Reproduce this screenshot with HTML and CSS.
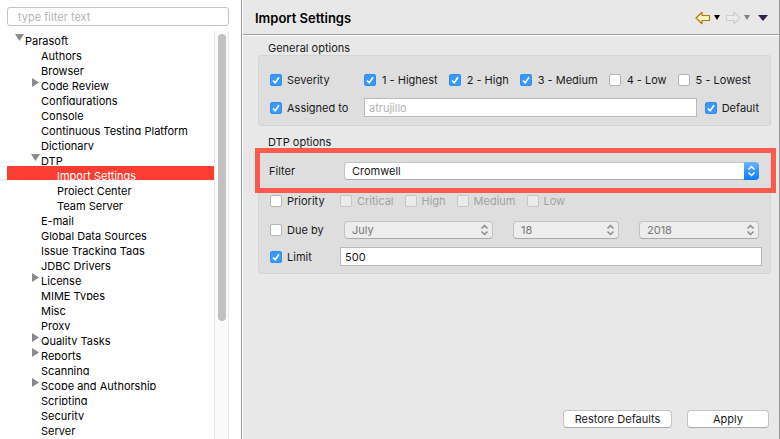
FILE: index.html
```html
<!DOCTYPE html>
<html lang="en">
<head>
    <meta charset="UTF-8">
    <meta name="viewport" content="width=device-width, initial-scale=1.0">
    <title>Preferences</title>
    <link rel="stylesheet" href="styles.css">
</head>
<body>
    <div class="window">
        <nav class="sidebar">
            <input class="filter" type="text" placeholder="type filter text" aria-label="type filter text">
            <div class="tree-area">
                <ul class="tree">
                    <li class="open">Parasoft</li>
                    <li class="level1">Authors</li>
                    <li class="level1">Browser</li>
                    <li class="level1 closed">Code Review</li>
                    <li class="level1">Configurations</li>
                    <li class="level1">Console</li>
                    <li class="level1">Continuous Testing Platform</li>
                    <li class="level1">Dictionary</li>
                    <li class="level1 open">DTP</li>
                    <li class="level2 selected">Import Settings</li>
                    <li class="level2">Project Center</li>
                    <li class="level2">Team Server</li>
                    <li class="level1">E-mail</li>
                    <li class="level1">Global Data Sources</li>
                    <li class="level1">Issue Tracking Tags</li>
                    <li class="level1">JDBC Drivers</li>
                    <li class="level1 closed">License</li>
                    <li class="level1">MIME Types</li>
                    <li class="level1">Misc</li>
                    <li class="level1">Proxy</li>
                    <li class="level1 closed">Quality Tasks</li>
                    <li class="level1 closed">Reports</li>
                    <li class="level1">Scanning</li>
                    <li class="level1 closed">Scope and Authorship</li>
                    <li class="level1">Scripting</li>
                    <li class="level1">Security</li>
                    <li class="level1">Server</li>
                </ul>
                <div class="scrollbar"><div class="thumb"></div></div>
            </div>
        </nav>

        <main class="page">
            <header class="header">
                <h1>Import Settings</h1>
                <div class="toolbar">
                    <button class="tool" type="button" aria-label="Back">
                        <svg width="16" height="14" viewBox="0 0 16 14"><path d="M1 7 7 1.3V4.5H14.5V9.5H7V12.7Z" fill="#fff3c4" stroke="#b8780f" stroke-width="1.2" stroke-linejoin="round"/></svg>
                        <svg width="6" height="5" viewBox="0 0 6 5"><path d="M0 0H6L3 5Z" fill="#000"/></svg>
                    </button>
                    <button class="tool" type="button" aria-label="Forward" disabled>
                        <svg width="16" height="14" viewBox="0 0 16 14"><path d="M15 7 9 1.3V4.5H1.5V9.5H9V12.7Z" fill="#ececec" stroke="#cfcfcf" stroke-width="1.2" stroke-linejoin="round"/></svg>
                        <svg width="6" height="5" viewBox="0 0 6 5"><path d="M0 0H6L3 5Z" fill="#808080"/></svg>
                    </button>
                    <button class="tool menu" type="button" aria-label="Menu">
                        <svg width="10" height="6" viewBox="0 0 10 6"><path d="M0 0H10L5 6Z" fill="#33204d"/></svg>
                    </button>
                </div>
            </header>

            <form class="settings">
                <h2>General options</h2>
                <section class="group general">
                    <div class="row">
                        <label class="name"><input type="checkbox" checked>Severity</label>
                        <div class="checks severity">
                            <label><input type="checkbox" checked>1 - Highest</label>
                            <label><input type="checkbox" checked>2 - High</label>
                            <label><input type="checkbox" checked>3 - Medium</label>
                            <label><input type="checkbox">4 - Low</label>
                            <label><input type="checkbox">5 - Lowest</label>
                        </div>
                    </div>
                    <div class="row">
                        <label class="name"><input type="checkbox" checked>Assigned to</label>
                        <div class="assigned">
                            <input class="text" type="text" value="atrujillo" aria-label="Assigned to" disabled>
                            <label><input type="checkbox" checked>Default</label>
                        </div>
                    </div>
                </section>

                <h2>DTP options</h2>
                <section class="group dtp">
                    <div class="row filter-row">
                        <label class="filter-label" for="dtp-filter">Filter</label>
                        <div class="select active">
                            <select id="dtp-filter"><option>Cromwell</option></select>
                            <svg width="15" height="18" viewBox="0 0 15 18"><path d="M4.5 7.5 7.5 4.5 10.5 7.5M4.5 10.5 7.5 13.5 10.5 10.5"/></svg>
                        </div>
                    </div>
                    <div class="row priority-row">
                        <label class="name"><input type="checkbox">Priority</label>
                        <div class="checks">
                            <label class="off"><input type="checkbox" disabled>Critical</label>
                            <label class="off"><input type="checkbox" disabled>High</label>
                            <label class="off"><input type="checkbox" disabled>Medium</label>
                            <label class="off"><input type="checkbox" disabled>Low</label>
                        </div>
                    </div>
                    <div class="row due-row">
                        <label class="name"><input type="checkbox">Due by</label>
                        <div class="dates">
                            <div class="select">
                                <select aria-label="Month" disabled><option>July</option></select>
                                <svg width="15" height="18" viewBox="0 0 15 18"><path d="M4.5 7.5 7.5 4.5 10.5 7.5M4.5 10.5 7.5 13.5 10.5 10.5"/></svg>
                            </div>
                            <div class="select">
                                <select aria-label="Day" disabled><option>18</option></select>
                                <svg width="15" height="18" viewBox="0 0 15 18"><path d="M4.5 7.5 7.5 4.5 10.5 7.5M4.5 10.5 7.5 13.5 10.5 10.5"/></svg>
                            </div>
                            <div class="select">
                                <select aria-label="Year" disabled><option>2018</option></select>
                                <svg width="15" height="18" viewBox="0 0 15 18"><path d="M4.5 7.5 7.5 4.5 10.5 7.5M4.5 10.5 7.5 13.5 10.5 10.5"/></svg>
                            </div>
                        </div>
                    </div>
                    <div class="row limit-row">
                        <label class="name"><input type="checkbox" checked>Limit</label>
                        <input class="text limit" type="text" value="500" aria-label="Limit">
                    </div>
                </section>
            </form>

            <footer class="footer">
                <button class="restore" type="button">Restore Defaults</button>
                <button class="apply" type="button">Apply</button>
            </footer>
        </main>
    </div>
</body>
</html>
```

FILE: styles.css
```css
* {
    box-sizing: border-box;
    margin: 0;
    padding: 0;
}

body, input, select, button {
    font-family: Inter, "Liberation Sans", sans-serif;
    font-size: 11px;
    color: #1a1a1a;
}

.window {
    display: grid;
    grid-template-columns: 242px 1fr;
    height: 100vh;
    overflow: hidden;
    background: #e8e8e8;
}

/* preference tree */

.sidebar {
    display: flex;
    flex-direction: column;
    min-height: 0;
    padding: 7px 12px 0 7px;
    gap: 5px;
    background: #fff;
    border-right: 1px solid #9b9b9b;
}

.filter {
    flex: none;
    height: 19px;
    padding: 0 10px;
    border: 1px solid #c3c3c3;
    border-radius: 3px;
    background: #fff;
}

.filter::placeholder {
    color: #b4b4b4;
}

.tree-area {
    display: grid;
    grid-template-columns: 1fr 15px;
    flex: 1;
    min-height: 0;
}

.tree {
    list-style: none;
    overflow: hidden;
}

.tree li {
    display: flex;
    height: 14px;
    margin-bottom: 1px;
    padding-left: 18px;
    overflow: hidden;
    line-height: 20px;
    white-space: nowrap;
    color: #000;
}

.tree .level1 {
    padding-left: 34px;
}

.tree .level2 {
    padding-left: 50px;
}

.tree .open::before, .tree .closed::before {
    content: "";
    width: 7px;
    height: 9px;
    margin: 2px 2px 0 -9px;
    background: #8a8a8a;
    clip-path: polygon(0 0, 100% 50%, 0 100%);
}

.tree .open::before {
    width: 9px;
    height: 7px;
    margin: 3px 1px 0 -10px;
    clip-path: polygon(0 0, 100% 0, 50% 100%);
}

.tree .selected {
    background: #fc3d31;
    color: #fff;
}

.scrollbar {
    padding: 3px 3px 0;
    background: #fafafa;
    border: 1px solid #e8e8e8;
    border-width: 0 1px;
}

.thumb {
    width: 8px;
    height: 287px;
    border-radius: 4px;
    background: #c1c1c1;
}

/* settings page */

.page {
    display: flex;
    flex-direction: column;
    min-width: 0;
    border-left: 1px solid #fff;
    border-right: 1px solid #9b9b9b;
}

.header {
    display: flex;
    flex: none;
    align-items: center;
    justify-content: space-between;
    height: 36px;
    padding: 0 11px 0 12px;
    border-bottom: 1px solid #fff;
    box-shadow: inset 0 -1px #9b9b9b;
}

h1 {
    font-size: 13px;
    font-weight: 600;
    color: #000;
}

.toolbar {
    display: flex;
    gap: 5px;
}

.tool {
    display: flex;
    align-items: center;
    gap: 3px;
    border: none;
    background: none;
}

.menu {
    margin-left: 3px;
}

.settings {
    flex: 1;
    padding: 5px 8px 0 15px;
}

h2 {
    height: 14px;
    padding-left: 10px;
    font-size: 11px;
    font-weight: 400;
    line-height: 14px;
}

.group {
    border: 1px solid #d5d5d5;
    border-radius: 3px;
    background: #dedede;
}

.row {
    display: grid;
    grid-template-columns: 94px 1fr;
    align-items: center;
}

.row label {
    display: flex;
    align-items: center;
    gap: 5px;
    white-space: nowrap;
}

.general {
    display: grid;
    gap: 11px;
    margin-bottom: 9px;
    padding: 17px 11px 8px;
}

.checks {
    display: flex;
    gap: 11px;
}

.severity label {
    gap: 6px;
}

.assigned {
    display: grid;
    grid-template-columns: 1fr auto;
    align-items: center;
    gap: 8px;
}

input[type="checkbox"] {
    appearance: none;
    flex: none;
    width: 12px;
    height: 12px;
    border: 1px solid #b5b5b5;
    border-radius: 2px;
    background: #fff;
}

input[type="checkbox"]:checked {
    border-color: #2f8bf7;
    background: #3b99fc url("data:image/svg+xml,%3Csvg xmlns='http://www.w3.org/2000/svg' viewBox='0 0 10 10'%3E%3Cpath d='M2 5.5 4.2 7.8 8 2.2' fill='none' stroke='white' stroke-width='1.6'/%3E%3C/svg%3E");
}

input[type="checkbox"]:disabled {
    border-color: #c6c6c6;
    background: #ebebeb;
}

.off {
    color: #a3a3a3;
}

.text {
    width: 100%;
    min-width: 0;
    height: 19px;
    padding: 0 4px;
    border: 1px solid #b9b9b9;
    background: #fff;
}

.text:disabled {
    color: #b4b4b4;
}

.dtp {
    padding: 0 8px 7px 11px;
}

.filter-row {
    grid-template-columns: 75px 1fr;
    height: 45px;
    margin: -2px -14px 0 -15px;
    padding: 0 12px 0 9px;
    border: 5px solid #fb5a4c;
}

.select {
    display: grid;
    height: 18px;
    border: 1px solid #c3c3c3;
    border-bottom-color: #aaa;
    border-radius: 4px;
    background: #ededed;
}

.select select, .select svg {
    grid-area: 1 / 1;
}

.select select {
    appearance: none;
    width: 100%;
    height: 16px;
    padding: 0 7px;
    border: none;
    background: none;
}

.select select:disabled {
    color: #777;
    opacity: 1;
}

.select svg {
    justify-self: end;
    margin: -1px;
    fill: none;
    stroke: #8c8c8c;
    stroke-width: 1.5;
    pointer-events: none;
}

.dates svg {
    margin-right: 0;
}

.active {
    background: #fff;
}

.active svg {
    border-radius: 0 4px 4px 0;
    background: linear-gradient(#6bb3fa, #0a7bff);
    stroke: #fff;
}

.priority-row, .due-row, .limit-row {
    grid-template-columns: 70px 1fr;
}

.priority-row {
    height: 16px;
}

.due-row {
    height: 18px;
    margin: 12px 0 8px;
}

.dates {
    display: grid;
    grid-template-columns: 149fr 106fr 120fr;
    gap: 20px;
    padding: 0 3px 0 4px;
}

.footer {
    display: flex;
    flex: none;
    justify-content: flex-end;
    gap: 15px;
    padding: 0 10px 11px;
}

.footer button {
    height: 18px;
    border: 1px solid #c3c3c3;
    border-bottom-color: #aaa;
    border-radius: 4px;
    background: #fff;
}

.restore {
    width: 109px;
}

.apply {
    width: 82px;
}
```
